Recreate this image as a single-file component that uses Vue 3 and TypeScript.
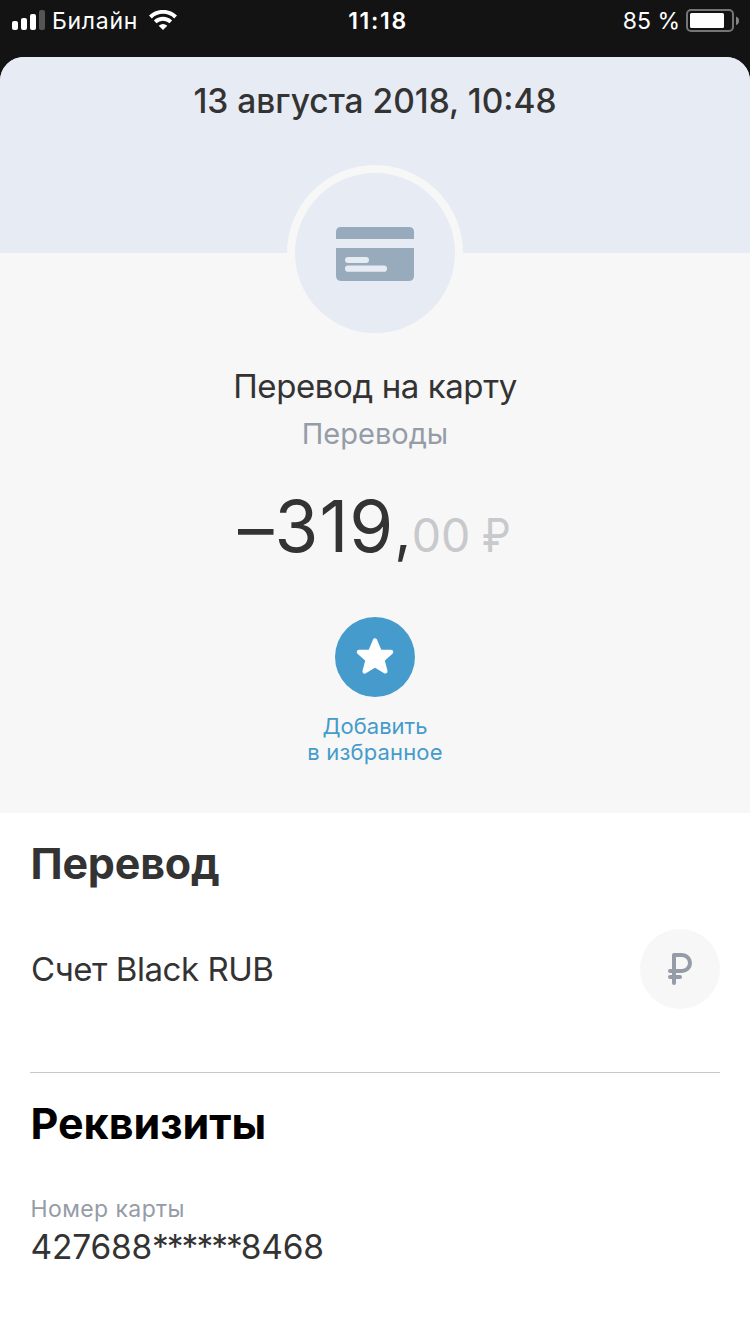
<script setup lang="ts">
interface Detail {
  label: string
  head: string
  mask: string
  tail: string
}

const status = { carrier: 'Билайн', time: '11:18', battery: '85 %' }
const bars = [9, 12, 16, 20]
const operation = {
  date: '13 августа 2018, 10:48',
  title: 'Перевод на карту',
  category: 'Переводы',
  sign: '–',
  whole: '319',
  cents: '00',
  currency: '₽',
}
const account = 'Счет Black RUB'
const details: Detail[] = [{ label: 'Номер карты', head: '427688', mask: '******', tail: '8468' }]
</script>

<template>
  <div class="screen">
    <header class="status">
      <div class="status-left">
        <div class="signal">
          <i v-for="(h, i) in bars" :key="i" class="bar" :class="{ off: i === 3 }" :style="{ height: h + 'px' }"></i>
        </div>
        <span class="carrier">{{ status.carrier }}</span>
        <svg class="wifi" viewBox="0 0 28 20" width="28" height="20">
          <path d="M1.400 7 A18 18 0 0 1 26.600 7" fill="none" stroke="#fff" stroke-width="4" />
          <path d="M6.200 11.800 A11.500 11.500 0 0 1 21.800 11.800" fill="none" stroke="#fff" stroke-width="3.800" />
          <path d="M14 20 L9.700 15.800 Q14 12.300 18.300 15.800 Z" fill="#fff" />
        </svg>
      </div>
      <span class="time">{{ status.time }}</span>
      <div class="status-right">
        <span class="percent">{{ status.battery }}</span>
        <svg class="battery" viewBox="0 0 54 24" width="54" height="24">
          <rect x="1" y="1" width="46" height="21" rx="4" fill="none" stroke="#757575" stroke-width="2" />
          <rect x="4" y="4" width="34" height="15" rx="1.500" fill="#fff" />
          <path d="M50 7.500 Q53 8.500 53 11.700 Q53 15 50 16 Z" fill="#858585" />
        </svg>
      </div>
    </header>

    <main class="sheet">
      <section class="hero">
        <div class="date"><span>{{ operation.date }}</span></div>
        <div class="badge">
          <svg viewBox="0 0 78 54" width="78" height="54">
            <path d="M0 12 V5 Q0 0 5 0 H73 Q78 0 78 5 V12 Z" fill="#97abbc" />
            <path d="M0 21 H78 V48.500 Q78 54 72.500 54 H5.500 Q0 54 0 48.500 Z" fill="#97abbc" />
            <rect x="9" y="30" width="24" height="6" rx="3" fill="#e6ebf4" />
            <rect x="9" y="38.500" width="42" height="6.300" rx="3.100" fill="#e6ebf4" />
          </svg>
        </div>
        <h1 class="title">{{ operation.title }}</h1>
        <p class="category">{{ operation.category }}</p>
        <p class="amount">
          <span class="whole sign">{{ operation.sign }}</span>
          <span class="whole">{{ operation.whole }}</span>
          <span class="comma">,</span>
          <span class="cents">{{ operation.cents }}</span>
          <span class="currency">{{ operation.currency }}</span>
        </p>
        <button class="favorite" type="button">
          <span class="star">
            <svg viewBox="0 0 80 80" width="80" height="80">
              <path
                d="M40 23.500 L44.700 34.800 L56 35 L47.300 42.700 L50.300 54.300 L40 48 L29.700 54.300 L32.700 42.700 L24 35 L35.300 34.800 Z"
                fill="#fff" stroke="#fff" stroke-width="4.500" stroke-linejoin="round"
              />
            </svg>
          </span>
          <span class="fav-text">Добавить</span>
          <span class="fav-text wide">в избранное</span>
        </button>
      </section>

      <section class="account">
        <h2 class="heading">Перевод</h2>
        <div class="account-row">
          <span class="account-name">{{ account }}</span>
          <span class="coin">
            <svg viewBox="0 0 80 80" width="80" height="80">
              <path
                d="M34 54 V26 H42 A8 8 0 0 1 42 42 H30 M30 48 H40"
                fill="none" stroke="#959ca7" stroke-width="4" stroke-linecap="round" stroke-linejoin="round"
              />
            </svg>
          </span>
        </div>
      </section>

      <section class="requisites">
        <h2 class="heading dark">Реквизиты</h2>
        <dl v-for="item in details" :key="item.label" class="detail">
          <dt>{{ item.label }}</dt>
          <dd>{{ item.head }}<span class="mask">{{ item.mask }}</span>{{ item.tail }}</dd>
        </dl>
      </section>
    </main>
  </div>
</template>

<style>
body {
  background: #131313;
}
</style>

<style scoped>
* {
  box-sizing: border-box;
  margin: 0;
  padding: 0;
}
.screen {
  display: flex;
  flex-direction: column;
  width: 750px;
  height: 1334px;
  overflow: hidden;
  background: #131313;
  color: #333;
  font-family: Inter, "Noto Sans", sans-serif;
  white-space: nowrap;
}
.status {
  display: grid;
  grid-template-columns: 1fr auto 1fr;
  align-items: center;
  flex: none;
  height: 57px;
  padding: 0 10px 16px 12px;
  color: #fff;
  font-size: 23px;
  line-height: 40px;
}
.status-left,
.status-right {
  display: flex;
  align-items: center;
}
.status-right {
  justify-content: flex-end;
}
.signal {
  display: flex;
  align-items: flex-end;
  gap: 3px;
  height: 20px;
  margin-bottom: 1px;
}
.bar {
  width: 6px;
  border-radius: 2px;
  background: #fff;
}
.off {
  background: #555;
}
.carrier {
  margin-left: 7px;
  letter-spacing: 0.7px;
}
.wifi {
  margin: 0 0 1px 11px;
}
.time {
  margin-left: 4px;
  font-weight: 600;
  letter-spacing: 1.7px;
}
.percent {
  margin-right: 6px;
}
.sheet {
  flex: 1;
  overflow: hidden;
  border-radius: 24px 24px 0 0;
  background: #fff;
}
.hero {
  display: flex;
  flex-direction: column;
  align-items: center;
  height: 756px;
  background: linear-gradient(#e6ebf4 196px, #f7f7f7 196px);
}
.date {
  height: 108px;
  padding-top: 24px;
  font-size: 33.5px;
  font-weight: 500;
  line-height: 40px;
}
.badge {
  display: flex;
  align-items: center;
  justify-content: center;
  flex: none;
  width: 176px;
  height: 176px;
  border: 8px solid #f7f7f7;
  border-radius: 50%;
  background: #e6ebf4;
}
.badge svg {
  margin: 2px 0 0 0.5px;
}
.title {
  margin-top: 25px;
  font-size: 33px;
  font-weight: 400;
  letter-spacing: -0.4px;
  line-height: 40px;
}
.category {
  margin-top: 8px;
  color: #959ca7;
  font-size: 29px;
  line-height: 40px;
}
.amount {
  display: flex;
  align-items: baseline;
  height: 80px;
  margin: 32px 0 0 3px;
  line-height: 80px;
}
.whole {
  font-size: 71px;
  letter-spacing: 1px;
}
.sign {
  transform: translateY(2px);
}
.comma {
  font-size: 60px;
  transform: translateY(-1px);
}
.cents,
.currency {
  color: #c7c9cc;
  font-size: 46.5px;
}
.currency {
  margin-left: 12px;
  transform: scaleX(0.88);
  transform-origin: left;
}
.favorite {
  display: flex;
  flex-direction: column;
  align-items: center;
  margin-top: 51px;
  border: 0;
  background: none;
  color: #459bcb;
  font-family: inherit;
  font-size: 22px;
  line-height: 26px;
}
.star {
  width: 80px;
  height: 80px;
  margin-bottom: 16px;
  border-radius: 50%;
  background: #459bcb;
}
.wide {
  letter-spacing: 0.15px;
}
.star svg,
.coin svg {
  display: block;
}
.account {
  height: 260px;
  margin: 0 30px;
  padding-top: 24px;
  border-bottom: 1px solid #c7c9cc;
}
.heading {
  padding-left: 0.5px;
  font-size: 43px;
  font-weight: 700;
  letter-spacing: -0.2px;
  line-height: 52px;
}
.dark {
  color: #000;
  letter-spacing: 0;
}
.account-row {
  display: flex;
  align-items: center;
  justify-content: space-between;
  height: 80px;
  margin-top: 40px;
}
.account-name {
  padding-left: 1px;
  font-size: 33px;
  letter-spacing: -0.45px;
}
.coin {
  width: 80px;
  height: 80px;
  border-radius: 50%;
  background: #f7f7f7;
}
.requisites {
  padding: 24px 30px 0;
}
.detail {
  margin-top: 45px;
  padding-left: 0.5px;
}
.detail dt {
  color: #959ca7;
  font-size: 23px;
  letter-spacing: 0.4px;
  line-height: 30px;
}
.detail dd {
  font-size: 33.5px;
  letter-spacing: -0.2px;
  line-height: 46px;
}
.mask {
  letter-spacing: -2px;
}
</style>
